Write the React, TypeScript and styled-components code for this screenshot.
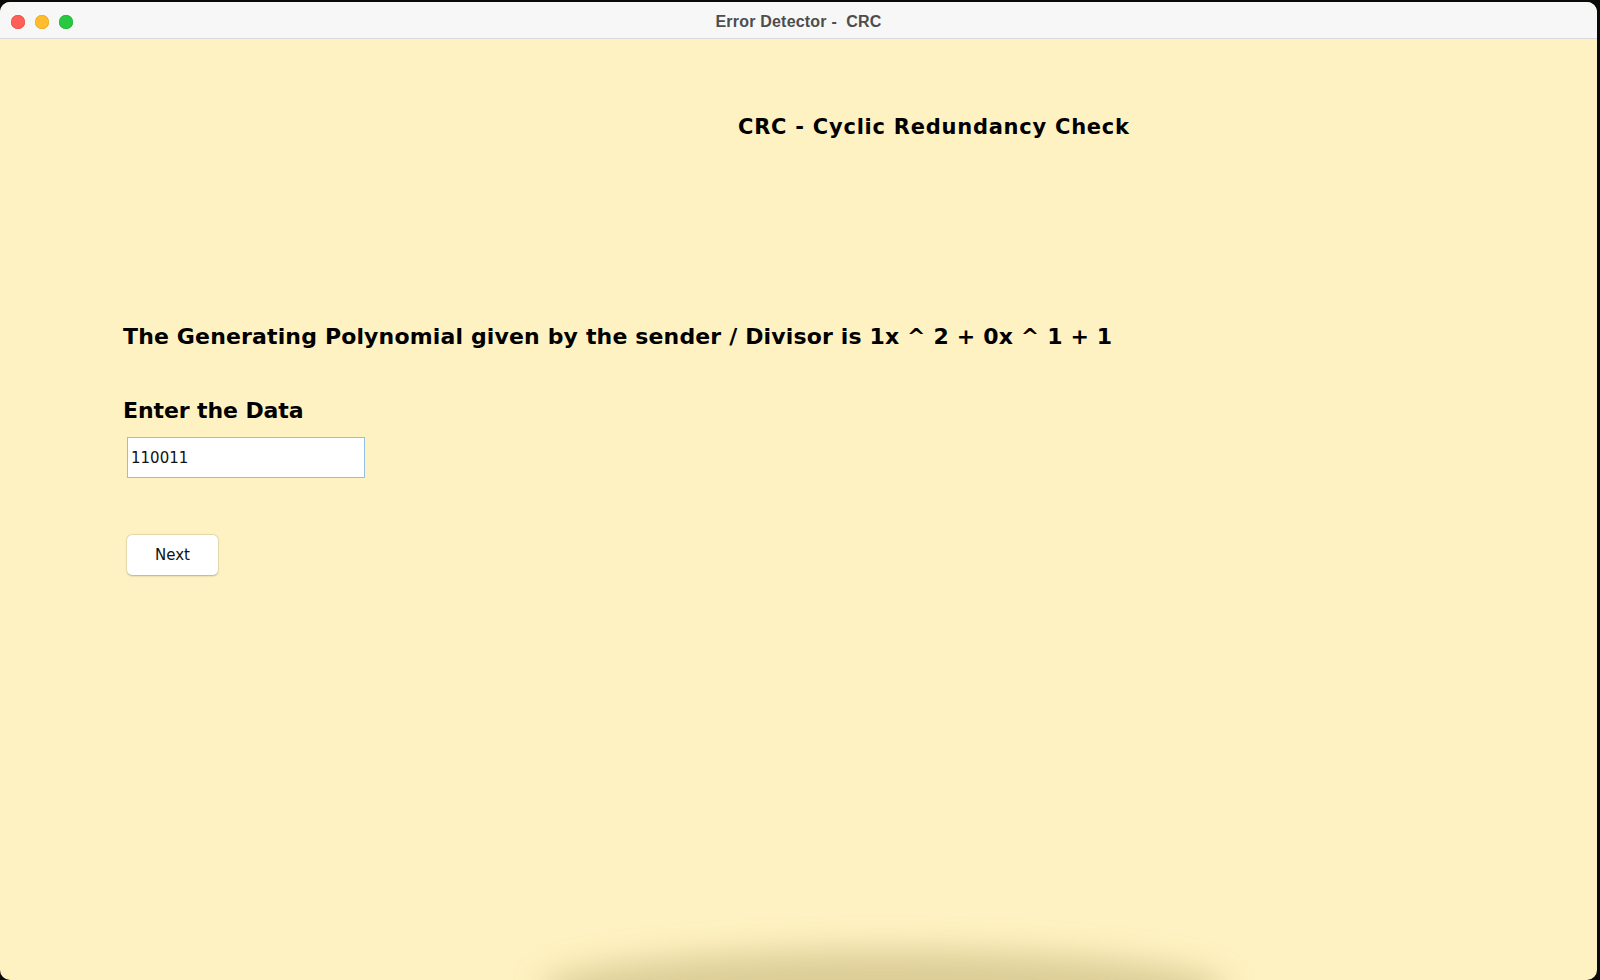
import React from "react";
import styled, { createGlobalStyle } from "styled-components";

const GlobalStyle = createGlobalStyle`
  html, body {
    margin: 0;
    padding: 0;
    background: #0a0a0a;
  }
  * { box-sizing: border-box; }
`;

const Screen = styled.div`
  width: 1600px;
  height: 980px;
  overflow: hidden;
  background: #0a0a0a;
  padding-top: 2px;
`;

const Window = styled.div`
  position: relative;
  width: 1597px;
  height: 978px;
  border-radius: 10px;
  overflow: hidden;
  display: flex;
  flex-direction: column;
  background: #fff2c2;
`;

const TitleBar = styled.div`
  flex: 0 0 37px;
  display: grid;
  grid-template-columns: 1fr auto 1fr;
  align-items: center;
  background: #f7f7f7;
  border-bottom: 1px solid #dadada;
`;

const Lights = styled.div`
  display: flex;
  gap: 10px;
  padding-left: 11px;
  padding-top: 4px;
`;

const Light = styled.span<{ $color: string; $edge: string }>`
  width: 14px;
  height: 14px;
  border-radius: 50%;
  background: ${(p) => p.$color};
  box-shadow: inset 0 0 0 0.5px ${(p) => p.$edge};
`;

const WindowTitle = styled.div`
  font-family: "Liberation Sans", "Noto Sans", sans-serif;
  font-weight: 700;
  font-size: 16px;
  letter-spacing: 0.2px;
  color: #4d4d4d;
  white-space: pre;
  padding-top: 4px;
`;

const Content = styled.div`
  flex: 1;
  display: flex;
  flex-direction: column;
  align-items: flex-start;
  padding: 76px 0 0 123px;
  font-family: "DejaVu Sans", Verdana, sans-serif;
  font-weight: 700;
  color: #000;
`;

const Heading = styled.h1`
  margin: 0 0 0 615px;
  font-size: 21px;
  letter-spacing: 0.75px;
  line-height: 24px;
  font-weight: 700;
`;

const Line = styled.div<{ $top: number; $spacing: number }>`
  margin-top: ${(p) => p.$top}px;
  font-size: 22px;
  letter-spacing: ${(p) => p.$spacing}px;
  line-height: 26px;
`;

const DataInput = styled.input`
  margin: 13px 0 0 4px;
  width: 238px;
  height: 41px;
  border: 1px solid #92bfe3;
  background: #fff;
  padding: 0 0 0 3px;
  font-family: "DejaVu Sans", "Noto Sans", sans-serif;
  font-weight: 400;
  font-size: 15px;
  color: #111;
  outline: none;
`;

const NextButton = styled.button`
  margin: 57px 0 0 4px;
  width: 91px;
  height: 40px;
  border: none;
  border-radius: 5px;
  background: #fff;
  box-shadow: 0 0.5px 2px rgba(0, 0, 0, 0.25), 0 0 0 0.5px rgba(0, 0, 0, 0.08);
  font-family: "DejaVu Sans", "Noto Sans", sans-serif;
  font-weight: 400;
  font-size: 15px;
  color: #111;
  padding: 0;
`;

const DockShadow = styled.div`
  position: absolute;
  left: 540px;
  right: 370px;
  bottom: -50px;
  height: 80px;
  border-radius: 50%;
  background: rgba(130, 110, 40, 0.28);
  filter: blur(16px);
  pointer-events: none;
`;

export default function App() {
  return (
    <>
      <GlobalStyle />
      <Screen>
        <Window>
          <TitleBar>
            <Lights>
              <Light $color="#fe5f57" $edge="#e2463f" />
              <Light $color="#febc2e" $edge="#e1a116" />
              <Light $color="#28c840" $edge="#14ae2a" />
            </Lights>
            <WindowTitle>{"Error Detector -  CRC"}</WindowTitle>
            <div />
          </TitleBar>
          <Content>
            <Heading>CRC - Cyclic Redundancy Check</Heading>
            <Line $top={185} $spacing={0.15}>
              The Generating Polynomial given by the sender / Divisor is 1x ^ 2 + 0x ^ 1 + 1
            </Line>
            <Line $top={48} $spacing={-0.1}>Enter the Data</Line>
            <DataInput defaultValue="110011" />
            <NextButton>Next</NextButton>
          </Content>
          <DockShadow />
        </Window>
      </Screen>
    </>
  );
}
